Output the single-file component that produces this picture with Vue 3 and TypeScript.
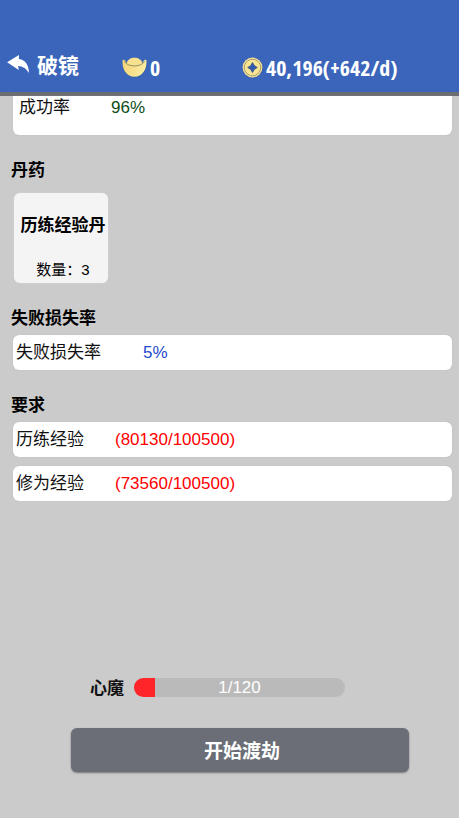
<script setup lang="ts">
interface Stat {
  label: string
  value: string
}

const ingots = 0
const coins = '40,196(+642/d)'
const requirements: Stat[] = [
  { label: '历练经验', value: '(80130/100500)' },
  { label: '修为经验', value: '(73560/100500)' },
]
const demonValue = 1
const demonMax = 120
const demonFill = 10
</script>

<template>
  <div class="page">
    <header class="topbar">
      <button class="back" type="button">
        <svg class="arrow" viewBox="0 0 24 20" aria-hidden="true">
          <path d="M0 7.5 12.5 0V4.2C19.5 5 23 11 23 19 20 14 16.5 12 11.6 11.6L12.3 15.8Z" fill="#fff" />
        </svg>
        <span>破镜</span>
      </button>
      <div class="money ingots">
        <svg class="ingot" viewBox="0 0 26 22" aria-hidden="true">
          <defs>
            <linearGradient id="gold" x1="0" x2="1" y1="0" y2="0.3">
              <stop offset="0" stop-color="#f6d373" />
              <stop offset="1" stop-color="#faeba0" />
            </linearGradient>
          </defs>
          <path d="M1.6 5C0.6 11.5 4 21.4 13.5 21.8 23 21.4 26.6 11.5 25.6 5Z" fill="#2f5192" opacity="0.5" />
          <path d="M0.6 3.2C2.2 2.4 3.4 3.6 4.2 6H21.8C22.6 3.6 23.8 2.4 25.4 3.2 26.4 11 22.5 20.8 13 20.8 3.5 20.8 -0.4 11 0.6 3.2Z" fill="url(#gold)" />
          <path d="M4.6 7C5.4 2.6 9 0.8 13 0.8 17 0.8 20.6 2.6 21.4 7 18.5 9.4 7.5 9.4 4.6 7Z" fill="#f7e18e" />
          <path d="M2.4 4.6C4.2 7.4 7.5 9.3 13 9.4 18.5 9.3 21.8 7.4 23.6 4.6" fill="none" stroke="#77765c" stroke-width="0.8" />
        </svg>
        <span>{{ ingots }}</span>
      </div>
      <div class="money coins">
        <svg class="coin" viewBox="0 0 22 22" aria-hidden="true">
          <circle cx="11.6" cy="11.5" r="10.2" fill="#32518c" opacity="0.6" />
          <circle cx="11" cy="11" r="10.4" fill="#f5df98" />
          <circle cx="11" cy="11" r="8.6" fill="none" stroke="#8b8a68" stroke-width="0.8" />
          <circle cx="11" cy="11" r="7.8" fill="#f9e590" />
          <path d="M11 5.8Q12.2 9.8 16 11 12.2 12.2 11 16.2 9.8 12.2 6 11 9.8 9.8 11 5.8Z" fill="#3159ad" stroke="#31538f" stroke-linejoin="round" />
        </svg>
        <span>{{ coins }}</span>
      </div>
    </header>

    <main class="content">
      <div class="card first">
        <span>成功率</span>
        <span class="value green">96%</span>
      </div>

      <section>
        <h2>丹药</h2>
        <button class="pill" type="button">
          <strong>历练经验丹</strong>
          <span>数量：3</span>
        </button>
      </section>

      <section>
        <h2>失败损失率</h2>
        <div class="card">
          <span>失败损失率</span>
          <span class="value blue">5%</span>
        </div>
      </section>

      <section>
        <h2>要求</h2>
        <div class="list">
          <div v-for="item in requirements" :key="item.label" class="card need">
            <span>{{ item.label }}</span>
            <span class="value red">{{ item.value }}</span>
          </div>
        </div>
      </section>
    </main>

    <footer class="actions">
      <div class="demon">
        <span id="demon-label" class="name">心魔</span>
        <div class="bar" role="progressbar" aria-labelledby="demon-label" :aria-valuenow="demonValue" :aria-valuemax="demonMax">
          <div class="fill" :style="{ width: demonFill + '%' }"></div>
          <span class="count">{{ demonValue }}/{{ demonMax }}</span>
        </div>
      </div>
      <button class="start" type="button">开始渡劫</button>
    </footer>
  </div>
</template>

<style>
body {
  background: #cbcbcb;
}
</style>

<style scoped>
.page {
  box-sizing: border-box;
  min-height: 100vh;
  display: flex;
  flex-direction: column;
  color: #111;
  font: 17px/24px "Liberation Sans", "Noto Sans CJK SC", sans-serif;
}
button {
  border: 0;
  margin: 0;
  padding: 0;
  font: inherit;
  color: inherit;
  cursor: pointer;
}
.topbar {
  display: grid;
  grid-template-columns: 115fr 120fr 210fr;
  align-items: end;
  padding: 48px 7px 6px;
  background: #3b65bb;
  border-bottom: 4px solid #6b6d71;
  color: #fff;
  font: bold 22px/38px "Open Sans Condensed", "Noto Sans Condensed", "Open Sans", "Noto Sans CJK SC", sans-serif;
}
.back {
  display: flex;
  align-items: center;
  gap: 7px;
  padding-bottom: 6px;
  background: none;
  font-family: "Noto Sans CJK SC", sans-serif;
  font-size: 21px;
  line-height: 32px;
}
.arrow {
  width: 23px;
  height: 19px;
}
.money {
  display: flex;
  align-items: center;
  gap: 3px;
  white-space: nowrap;
}
.ingot {
  width: 25px;
  height: 21px;
}
.coin {
  width: 21px;
  height: 21px;
}
.content {
  padding: 0 7px 0 11px;
}
.card {
  display: flex;
  align-items: center;
  gap: 42px;
  min-height: 35px;
  margin-left: 2px;
  padding: 0 3px;
  box-sizing: border-box;
  border-radius: 6px;
  background: #fff;
  box-shadow: 0 0 1px #aaa;
}
.first {
  align-items: flex-start;
  min-height: 39px;
  padding: 0 6px;
  gap: 41px;
  border-radius: 0 0 6px 6px;
}
.need {
  gap: 31px;
}
.green {
  color: #0f4d17;
}
.blue {
  color: #2549ce;
}
.red {
  color: #f00;
}
h2 {
  margin: 0;
  padding: 22px 0 6px;
  font: bold 17px/24px "Noto Sans CJK SC", sans-serif;
  color: #000;
}
.pill {
  display: flex;
  flex-direction: column;
  align-items: center;
  width: 94px;
  height: 90px;
  margin: 6px 0 0 3px;
  padding: 19px 0 1px 4px;
  box-sizing: border-box;
  justify-content: space-between;
  border-radius: 6px;
  background: #f4f4f4;
  box-shadow: 0 0 1px #ddd;
  color: #000;
  font-size: 15px;
}
.pill strong {
  font-size: 17px;
  font-family: "Noto Sans CJK SC", sans-serif;
}
.list {
  display: grid;
  gap: 9px;
}
.actions {
  margin-top: auto;
  padding: 0 50px 46px 71px;
}
.demon {
  display: flex;
  align-items: center;
  gap: 10px;
  padding: 0 64px 29px 19px;
}
.name {
  font-family: "Noto Sans CJK SC", sans-serif;
  font-weight: bold;
}
.bar {
  position: relative;
  flex: 1;
  height: 19px;
  overflow: hidden;
  border-radius: 10px;
  background: #bababa;
  text-align: center;
}
.fill {
  height: 100%;
  background: #ff2528;
}
.count {
  position: absolute;
  inset: 0;
  line-height: 19px;
  color: #fff;
}
.start {
  width: 100%;
  min-height: 44px;
  padding-left: 4px;
  border-radius: 6px;
  background: #6b6e76;
  box-shadow: 0 1px 2px #777;
  color: #fff;
  font: bold 19px/28px "Noto Sans CJK SC", sans-serif;
}
</style>
